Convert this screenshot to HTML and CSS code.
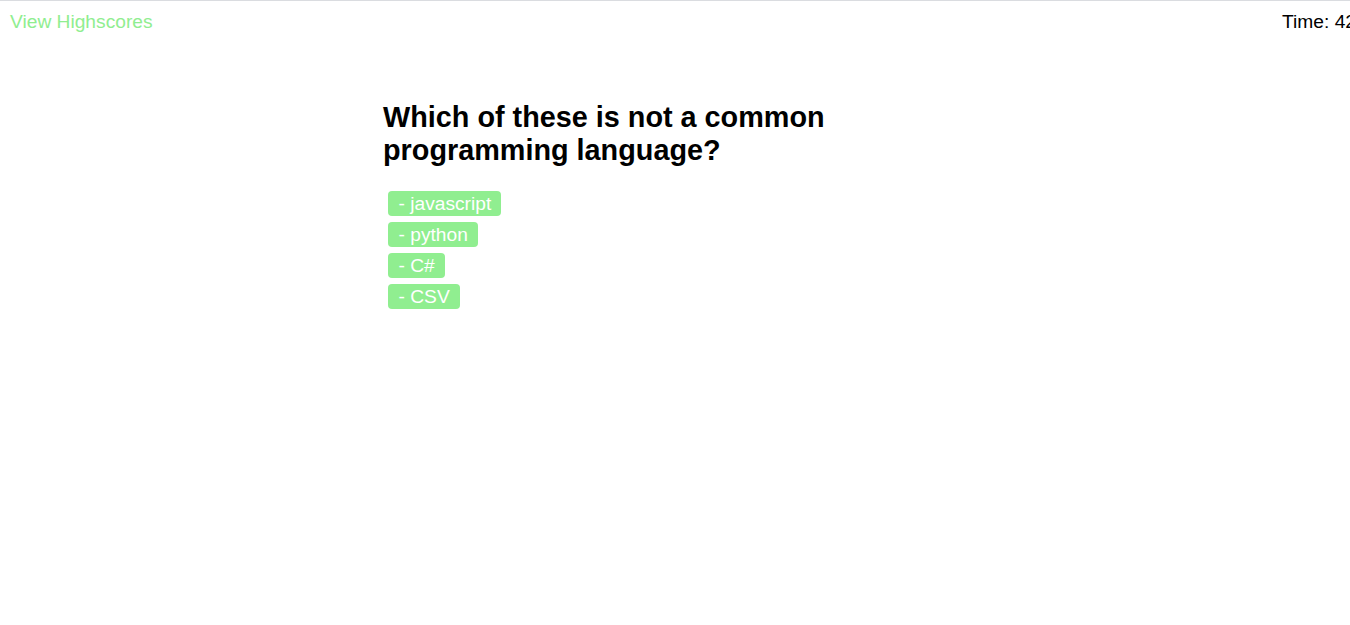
FILE: index.html
```html
<!DOCTYPE html>
<html>
<head>
<meta charset="utf-8">
<link rel="stylesheet" href="styles.css">
</head>
<body>
<header class="topbar">
  <a class="highscores">View Highscores</a>
  <span class="timer">Time: 42</span>
</header>
<main class="quiz">
  <h2 class="question">Which of these is not a common programming language?</h2>
  <div class="choices">
    <button class="choice">- javascript</button>
    <button class="choice">- python</button>
    <button class="choice">- C#</button>
    <button class="choice">- CSV</button>
  </div>
</main>
</body>
</html>
```
FILE: styles.css
```css
html, body {
  margin: 0;
  padding: 0;
  background: #fff;
  overflow: hidden;
  font-family: "Liberation Sans", Arial, sans-serif;
}
body {
  border-top: 1px solid #dadce0;
  font-size: 19.2px;
}
.topbar {
  display: flex;
  justify-content: space-between;
  padding: 10px 0 0 10px;
  font-size: 19.2px;
  line-height: 22px;
  overflow: hidden;
}
.highscores {
  color: #90ee90;
  cursor: pointer;
}
.timer {
  color: #000;
  margin-right: -6px;
  white-space: nowrap;
}
.quiz {
  width: 480px;
  margin: 68px 0 0 383px;
}
.question {
  font-size: 28.8px;
  line-height: 33px;
  font-weight: bold;
  margin: 0 0 24px 0;
}
.choices {
  display: flex;
  flex-direction: column;
  align-items: flex-start;
  gap: 6px;
  padding-left: 5px;
}
.choice {
  background: #90ee90;
  color: #fff;
  border: none;
  border-radius: 4px;
  font-family: "Liberation Sans", Arial, sans-serif;
  font-size: 19.2px;
  line-height: 25px;
  height: 25px;
  padding: 0 10px 0 10.5px;
}
```
